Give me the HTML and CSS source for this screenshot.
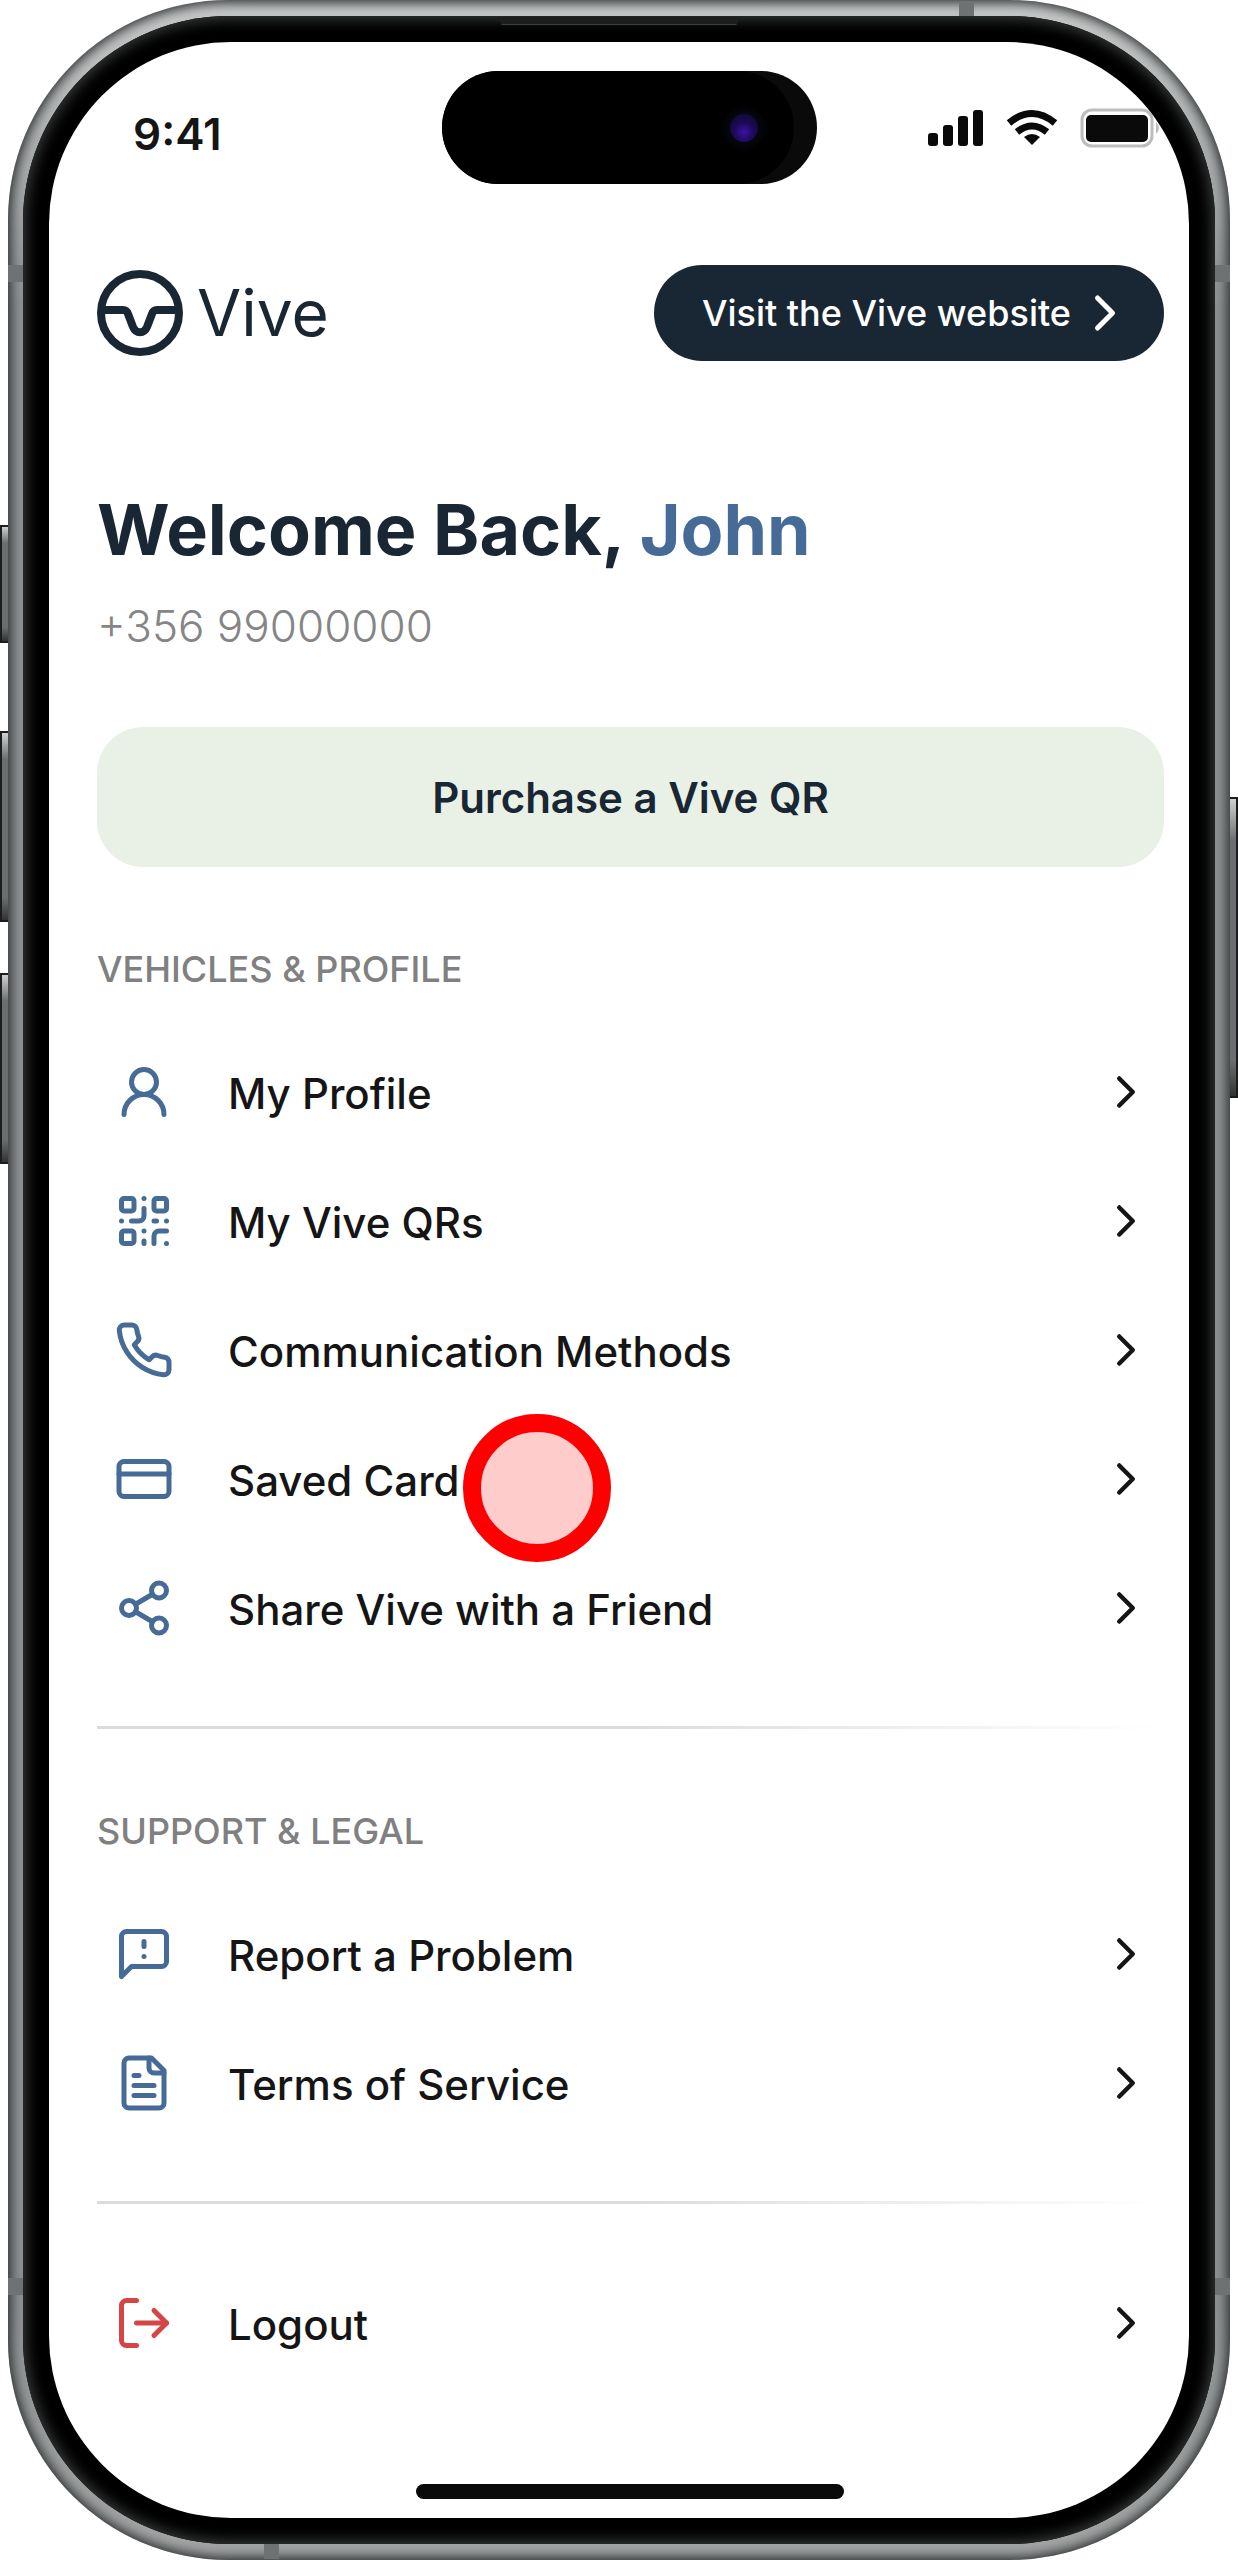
FILE: index.html
```html
<!DOCTYPE html>
<html lang="en">
  <head>
    <title>Vive - My Account</title>
    <meta charset="UTF-8" />
    <meta name="viewport" content="width=device-width, initial-scale=1.0" />
    <link rel="stylesheet" href="styles.css">
  </head>
  <body>
    <div class="device">
      <span class="side-btn action"></span>
      <span class="side-btn volume-up"></span>
      <span class="side-btn volume-down"></span>
      <span class="side-btn power"></span>

      <div class="phone">
        <span class="antenna left-top"></span>
        <span class="antenna left-bottom"></span>
        <span class="antenna right-top"></span>
        <span class="antenna right-bottom"></span>
        <span class="antenna top"></span>
        <span class="antenna bottom"></span>

        <div class="bezel">
          <span class="speaker"></span>
          <div class="screen">
            <div class="status-bar">
              <span class="time">9:41</span>
              <div class="island">
                <div class="island-front"><span class="camera"></span></div>
              </div>
              <div class="status-icons">
                <svg width="56" height="38" viewBox="0 0 56 38" fill="#0a0a0a">
                  <rect x="0" y="24" width="10" height="13" rx="3" />
                  <rect x="15" y="16" width="10" height="21" rx="3" />
                  <rect x="30" y="7" width="10" height="30" rx="3" />
                  <rect x="45" y="1" width="10" height="36" rx="3" />
                </svg>
                <svg width="54" height="38" viewBox="0 0 54 38" fill="none" stroke="#0a0a0a" stroke-width="7">
                  <path d="M4 14Q27 -5 50 14" />
                  <path d="M12 23Q27 11 42 23" />
                  <path d="M27 36L19 28Q27 22 35 28Z" fill="#0a0a0a" stroke="none" />
                </svg>
                <svg width="84" height="40" viewBox="0 0 84 40">
                  <rect x="2" y="2" width="70" height="36" rx="10" fill="none" stroke="#bdbdbd" stroke-width="3" />
                  <rect x="6" y="7" width="62" height="27" rx="5" fill="#0a0a0a" />
                  <path d="M76 14q6 6 0 12z" fill="#bdbdbd" />
                </svg>
              </div>
            </div>

            <main class="content">
              <header>
                <a href="#" class="logo">
                  <svg width="86" height="86" viewBox="0 0 86 86" fill="none" stroke="#192633" stroke-width="8">
                    <circle cx="43" cy="43" r="39" />
                    <path d="M5 40h21c3 0 4 1 5 4l5 13c3 7 11 7 14 0l5-13c1-3 2-4 5-4h21" />
                  </svg>
                  <span>Vive</span>
                </a>
                <a href="#" class="website-link">
                  Visit the Vive website
                  <svg class="chevron" viewBox="0 0 24 24"><path d="M9 18l6-6-6-6" /></svg>
                </a>
              </header>

              <h1>Welcome Back, <span class="highlight">John</span></h1>
              <p class="phone-number">+356 99000000</p>

              <button type="button" class="purchase">Purchase a Vive QR</button>

              <h2>VEHICLES &amp; PROFILE</h2>
              <ul>
                <li>
                  <a href="#">
                    <svg class="icon" viewBox="0 0 24 24">
                      <circle cx="12" cy="8" r="5" />
                      <path d="M20 21a8 8 0 0 0-16 0" />
                    </svg>
                    <span>My Profile</span>
                    <svg class="chevron" viewBox="0 0 24 24"><path d="M9 18l6-6-6-6" /></svg>
                  </a>
                </li>
                <li>
                  <a href="#">
                    <svg class="icon" viewBox="0 0 24 24">
                      <rect x="3" y="3" width="5" height="5" rx="1" />
                      <rect x="16" y="3" width="5" height="5" rx="1" />
                      <rect x="3" y="16" width="5" height="5" rx="1" />
                      <path d="M21 16h-3a2 2 0 0 0-2 2v3" />
                      <path d="M21 21v.01" />
                      <path d="M12 7v3a2 2 0 0 1-2 2H7" />
                      <path d="M3 12h.01" />
                      <path d="M12 3h.01" />
                      <path d="M12 16v.01" />
                      <path d="M16 12h1" />
                      <path d="M21 12v.01" />
                      <path d="M12 21v-1" />
                    </svg>
                    <span>My Vive QRs</span>
                    <svg class="chevron" viewBox="0 0 24 24"><path d="M9 18l6-6-6-6" /></svg>
                  </a>
                </li>
                <li>
                  <a href="#">
                    <svg class="icon" viewBox="0 0 24 24">
                      <path d="M22 16.92v3a2 2 0 0 1-2.18 2 19.79 19.79 0 0 1-8.63-3.07 19.5 19.5 0 0 1-6-6 19.79 19.79 0 0 1-3.07-8.67A2 2 0 0 1 4.11 2h3a2 2 0 0 1 2 1.72 12.84 12.84 0 0 0 .7 2.81 2 2 0 0 1-.45 2.11L8.09 9.91a16 16 0 0 0 6 6l1.27-1.27a2 2 0 0 1 2.11-.45 12.84 12.84 0 0 0 2.81.7A2 2 0 0 1 22 16.92z" />
                    </svg>
                    <span>Communication Methods</span>
                    <svg class="chevron" viewBox="0 0 24 24"><path d="M9 18l6-6-6-6" /></svg>
                  </a>
                </li>
                <li>
                  <a href="#">
                    <svg class="icon" viewBox="0 0 24 24">
                      <rect x="2" y="5" width="20" height="14" rx="2" />
                      <path d="M2 10h20" />
                    </svg>
                    <span>Saved Card</span>
                    <svg class="chevron" viewBox="0 0 24 24"><path d="M9 18l6-6-6-6" /></svg>
                  </a>
                  <span class="touch"></span>
                </li>
                <li>
                  <a href="#">
                    <svg class="icon" viewBox="0 0 24 24">
                      <circle cx="18" cy="5" r="3" />
                      <circle cx="6" cy="12" r="3" />
                      <circle cx="18" cy="19" r="3" />
                      <path d="M8.59 13.51l6.83 3.98M15.41 6.51l-6.82 3.98" />
                    </svg>
                    <span>Share Vive with a Friend</span>
                    <svg class="chevron" viewBox="0 0 24 24"><path d="M9 18l6-6-6-6" /></svg>
                  </a>
                </li>
              </ul>

              <hr>

              <h2>SUPPORT &amp; LEGAL</h2>
              <ul>
                <li>
                  <a href="#">
                    <svg class="icon" viewBox="0 0 24 24">
                      <path d="M21 15a2 2 0 0 1-2 2H7l-4 4V5a2 2 0 0 1 2-2h14a2 2 0 0 1 2 2z" />
                      <path d="M12 7v2" />
                      <path d="M12 13h.01" />
                    </svg>
                    <span>Report a Problem</span>
                    <svg class="chevron" viewBox="0 0 24 24"><path d="M9 18l6-6-6-6" /></svg>
                  </a>
                </li>
                <li>
                  <a href="#">
                    <svg class="icon" viewBox="0 0 24 24">
                      <path d="M15 2H6a2 2 0 0 0-2 2v16a2 2 0 0 0 2 2h12a2 2 0 0 0 2-2V7z" />
                      <path d="M14 2v4a2 2 0 0 0 2 2h4" />
                      <path d="M10 9H8" />
                      <path d="M16 13H8" />
                      <path d="M16 17H8" />
                    </svg>
                    <span>Terms of Service</span>
                    <svg class="chevron" viewBox="0 0 24 24"><path d="M9 18l6-6-6-6" /></svg>
                  </a>
                </li>
              </ul>

              <hr>

              <ul class="logout">
                <li>
                  <a href="#">
                    <svg class="icon" viewBox="0 0 24 24">
                      <path d="M9 21H5a2 2 0 0 1-2-2V5a2 2 0 0 1 2-2h4" />
                      <path d="M16 17l5-5-5-5" />
                      <path d="M21 12H9" />
                    </svg>
                    <span>Logout</span>
                    <svg class="chevron" viewBox="0 0 24 24"><path d="M9 18l6-6-6-6" /></svg>
                  </a>
                </li>
              </ul>
            </main>

            <div class="home-bar">
              <div class="home-indicator"></div>
            </div>
          </div>
        </div>
      </div>
    </div>
  </body>
</html>
```
FILE: styles.css
```css
* {
  box-sizing: border-box;
}
body {
  font-family: "Inter", "Liberation Sans", sans-serif;
  color: #151515;
  margin: 0;
  background: #ffffff;
}
a {
  color: inherit;
  text-decoration: none;
}

/* Phone frame */
.device {
  position: relative;
  padding: 0 8px;
}
.phone {
  position: relative;
  padding: 16px 15px;
  border-radius: 220px;
  background: linear-gradient(#c8caca, #8e9192 12%, #8e9192 90%, #a4a6a6);
  box-shadow: inset 0 0 12px 3px #2a2d2e;
}
.bezel {
  position: relative;
  padding: 26px;
  border-radius: 206px;
  background: #000000;
  box-shadow: inset 0 0 0 2px #232525, inset 0 0 14px 3px #3a3c3c;
}
.screen {
  border-radius: 182px;
  background: #ffffff;
  overflow: hidden;
}
.side-btn {
  position: absolute;
  width: 10px;
  border: 2px solid #1c1e1e;
  background: linear-gradient(#d0d0d0, #6b6e70 14%, #6b6e70 88%, #333333);
}
.side-btn.action {
  left: 0;
  top: 525px;
  height: 118px;
}
.side-btn.volume-up {
  left: 0;
  top: 731px;
  height: 191px;
}
.side-btn.volume-down {
  left: 0;
  top: 973px;
  height: 191px;
}
.side-btn.power {
  right: 0;
  top: 797px;
  height: 301px;
}
.antenna {
  position: absolute;
  width: 15px;
  height: 17px;
  background: #6f7273;
}
.antenna.left-top {
  left: 0;
  top: 265px;
}
.antenna.left-bottom {
  left: 0;
  bottom: 265px;
}
.antenna.right-top {
  right: 0;
  top: 265px;
}
.antenna.right-bottom {
  right: 0;
  bottom: 265px;
}
.antenna.top {
  right: 256px;
  top: 1px;
}
.antenna.bottom {
  left: 256px;
  bottom: 1px;
}
.speaker {
  position: absolute;
  top: 1px;
  left: 50%;
  width: 244px;
  height: 8px;
  margin-left: -122px;
  background: #1d1e1e;
  border-bottom: 1px solid #3c3e3e;
  clip-path: polygon(0 0, 100% 0, 98% 100%, 2% 100%);
}

/* Status bar */
.status-bar {
  display: grid;
  grid-template-columns: 1fr 375px 1fr;
  align-items: center;
  padding: 29px 0 0 20px;
}
.time {
  padding: 12px 0 0 64px;
  font-size: 44px;
  font-weight: 600;
  line-height: 52px;
}
.island {
  height: 113px;
  border-radius: 57px;
  background: #0a0a0a;
}
.island-front {
  display: flex;
  align-items: center;
  justify-content: flex-end;
  width: 352px;
  height: 113px;
  padding-right: 36px;
  border-radius: 57px;
  background: #000000;
}
.camera {
  width: 28px;
  height: 28px;
  border-radius: 50%;
  background: radial-gradient(circle at 50% 65%, #3a12a8, #1b0a52 45%, #0d0730);
  box-shadow: 0 0 6px 6px #05070d;
}
.status-icons {
  display: flex;
  align-items: center;
  gap: 21px;
  padding-left: 111px;
}
.status-icons svg {
  flex: none;
}

/* Page content */
.content {
  padding: 81px 25px 0 48px;
}
header {
  display: flex;
  align-items: center;
  justify-content: space-between;
}
.logo {
  display: flex;
  align-items: center;
  gap: 14px;
  color: #192633;
  font-size: 64px;
  line-height: 86px;
}
.website-link {
  display: flex;
  align-items: center;
  gap: 4px;
  height: 96px;
  padding: 0 29px 0 48px;
  border-radius: 48px;
  background: #192633;
  color: #ffffff;
  font-size: 36px;
  font-weight: 500;
  white-space: nowrap;
}
h1 {
  margin: 124px 0 0;
  color: #192633;
  font-size: 70px;
  font-weight: 700;
  line-height: 90px;
}
h1 .highlight {
  color: #456b96;
}
.phone-number {
  margin: 25px 0 0;
  color: #858585;
  font-size: 44px;
  font-weight: 300;
  line-height: 52px;
}
.purchase {
  display: block;
  width: 100%;
  height: 140px;
  margin-top: 75px;
  border: none;
  border-radius: 46px;
  background: #e9f1e6;
  color: #192633;
  font-family: inherit;
  font-size: 42px;
  font-weight: 600;
  cursor: pointer;
}
h2 {
  margin: 80px 0 36px;
  color: #808080;
  font-size: 36px;
  font-weight: 500;
  line-height: 44px;
}
ul {
  margin: 0;
  padding: 0;
  list-style: none;
}
li {
  position: relative;
}
li a {
  display: flex;
  align-items: center;
  height: 129px;
  padding: 0 11px 0 17px;
  font-size: 42px;
  font-weight: 500;
}
li a span {
  flex: 1;
  padding: 4px 0 0 54px;
}
.icon,
.chevron {
  flex: none;
  width: 60px;
  height: 60px;
  fill: none;
  stroke: #456b96;
  stroke-width: 2;
  stroke-linecap: round;
  stroke-linejoin: round;
}
.chevron {
  stroke: currentColor;
}
li .chevron {
  width: 54px;
  height: 54px;
}
.logout .icon {
  stroke: #d64545;
}
.touch {
  position: absolute;
  left: 366px;
  top: 0;
  width: 148px;
  height: 148px;
  border: 18px solid #ff0000;
  border-radius: 50%;
  background: #ffcccc;
}
hr {
  height: 3px;
  margin: 54px 0;
  border: none;
  background: linear-gradient(to right, #dcdcdc 50%, #ffffff);
}
.home-bar {
  padding: 97px 0 19px 22px;
}
.home-indicator {
  width: 428px;
  height: 15px;
  margin: 0 auto;
  border-radius: 8px;
  background: #0a0a0a;
}
```
